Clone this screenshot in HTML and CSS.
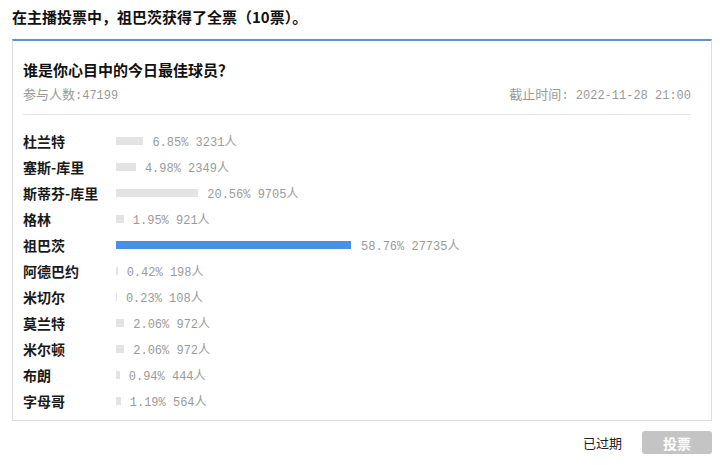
FILE: index.html
```html
<!DOCTYPE html>
<html lang="zh-CN">
<head>
<meta charset="utf-8">
<title>投票</title>
<link rel="stylesheet" href="styles.css">
</head>
<body>
<div class="headline">在主播投票中，祖巴茨获得了全票（10票）。</div>
<div class="poll">
  <div class="title">谁是你心目中的今日最佳球员？</div>
  <div class="meta">
    <span>参与人数<span class="n">:47199</span></span>
    <span>截止时间<span class="n">: 2022-11-28 21:00</span></span>
  </div>
  <ul class="list">
    <li class="row"><span class="name">杜兰特</span><span class="bar" style="width:27.4px"></span><span class="stat">6.85% 3231人</span></li>
    <li class="row"><span class="name">塞斯-库里</span><span class="bar" style="width:19.92px"></span><span class="stat">4.98% 2349人</span></li>
    <li class="row"><span class="name">斯蒂芬-库里</span><span class="bar" style="width:82.24px"></span><span class="stat">20.56% 9705人</span></li>
    <li class="row"><span class="name">格林</span><span class="bar" style="width:7.8px"></span><span class="stat">1.95% 921人</span></li>
    <li class="row"><span class="name">祖巴茨</span><span class="bar top" style="width:235.04px"></span><span class="stat">58.76% 27735人</span></li>
    <li class="row"><span class="name">阿德巴约</span><span class="bar" style="width:1.68px"></span><span class="stat">0.42% 198人</span></li>
    <li class="row"><span class="name">米切尔</span><span class="bar" style="width:0.92px"></span><span class="stat">0.23% 108人</span></li>
    <li class="row"><span class="name">莫兰特</span><span class="bar" style="width:8.24px"></span><span class="stat">2.06% 972人</span></li>
    <li class="row"><span class="name">米尔顿</span><span class="bar" style="width:8.24px"></span><span class="stat">2.06% 972人</span></li>
    <li class="row"><span class="name">布朗</span><span class="bar" style="width:3.76px"></span><span class="stat">0.94% 444人</span></li>
    <li class="row"><span class="name">字母哥</span><span class="bar" style="width:4.76px"></span><span class="stat">1.19% 564人</span></li>
  </ul>
</div>
<div class="footer">
  <span class="expired">已过期</span>
  <button class="vote" type="button" disabled>投票</button>
</div>
</body>
</html>
```
FILE: styles.css
```css
html, body {
  margin: 0;
  background: #fff;
}
body {
  padding: 7px 11px 0 12px;
  font-family: "Noto Sans CJK SC", "Liberation Sans", sans-serif;
  color: #222;
}
.headline {
  font-size: 15px;
  font-weight: bold;
  line-height: 20px;
  color: #111;
  margin-bottom: 12px;
}
.poll {
  border: 1px solid #dedede;
  border-top: 2px solid #5e93c4;
  padding: 19px 20px 6px 10px;
}
.title {
  font-size: 15px;
  font-weight: bold;
  line-height: 20px;
  color: #111;
}
.meta {
  display: flex;
  justify-content: space-between;
  align-items: baseline;
  margin-top: 4px;
  padding-bottom: 8px;
  border-bottom: 1px solid #e5e5e5;
  font-size: 13px;
  line-height: 20px;
  color: #999;
}
.n {
  font-family: "Liberation Mono", "Noto Sans CJK SC", monospace;
  font-size: 12px;
}
.list {
  list-style: none;
  margin: 13px 0 0;
  padding: 0;
}
.row {
  display: flex;
  align-items: center;
  height: 26px;
}
.name {
  width: 93px;
  flex: none;
  font-size: 14px;
  font-weight: bold;
  color: #1a1a1a;
  white-space: nowrap;
}
.bar {
  flex: none;
  height: 8px;
  background: #e3e3e3;
  margin-right: 9px;
}
.bar.top {
  background: #4a90e2;
  margin-right: 10px;
}
.stat {
  font-family: "Liberation Mono", "Noto Sans CJK SC", monospace;
  font-size: 12px;
  color: #9a9a9a;
  white-space: pre;
}
.footer {
  display: flex;
  justify-content: flex-end;
  align-items: center;
  gap: 20px;
  margin-top: 10px;
}
.expired {
  font-size: 13px;
  color: #222;
}
.vote {
  width: 70px;
  height: 23px;
  border: none;
  border-radius: 3px;
  background: #c4c4c4;
  color: #fff;
  font-family: "Noto Sans CJK SC", sans-serif;
  font-size: 14px;
  font-weight: bold;
  padding: 0;
}
```
